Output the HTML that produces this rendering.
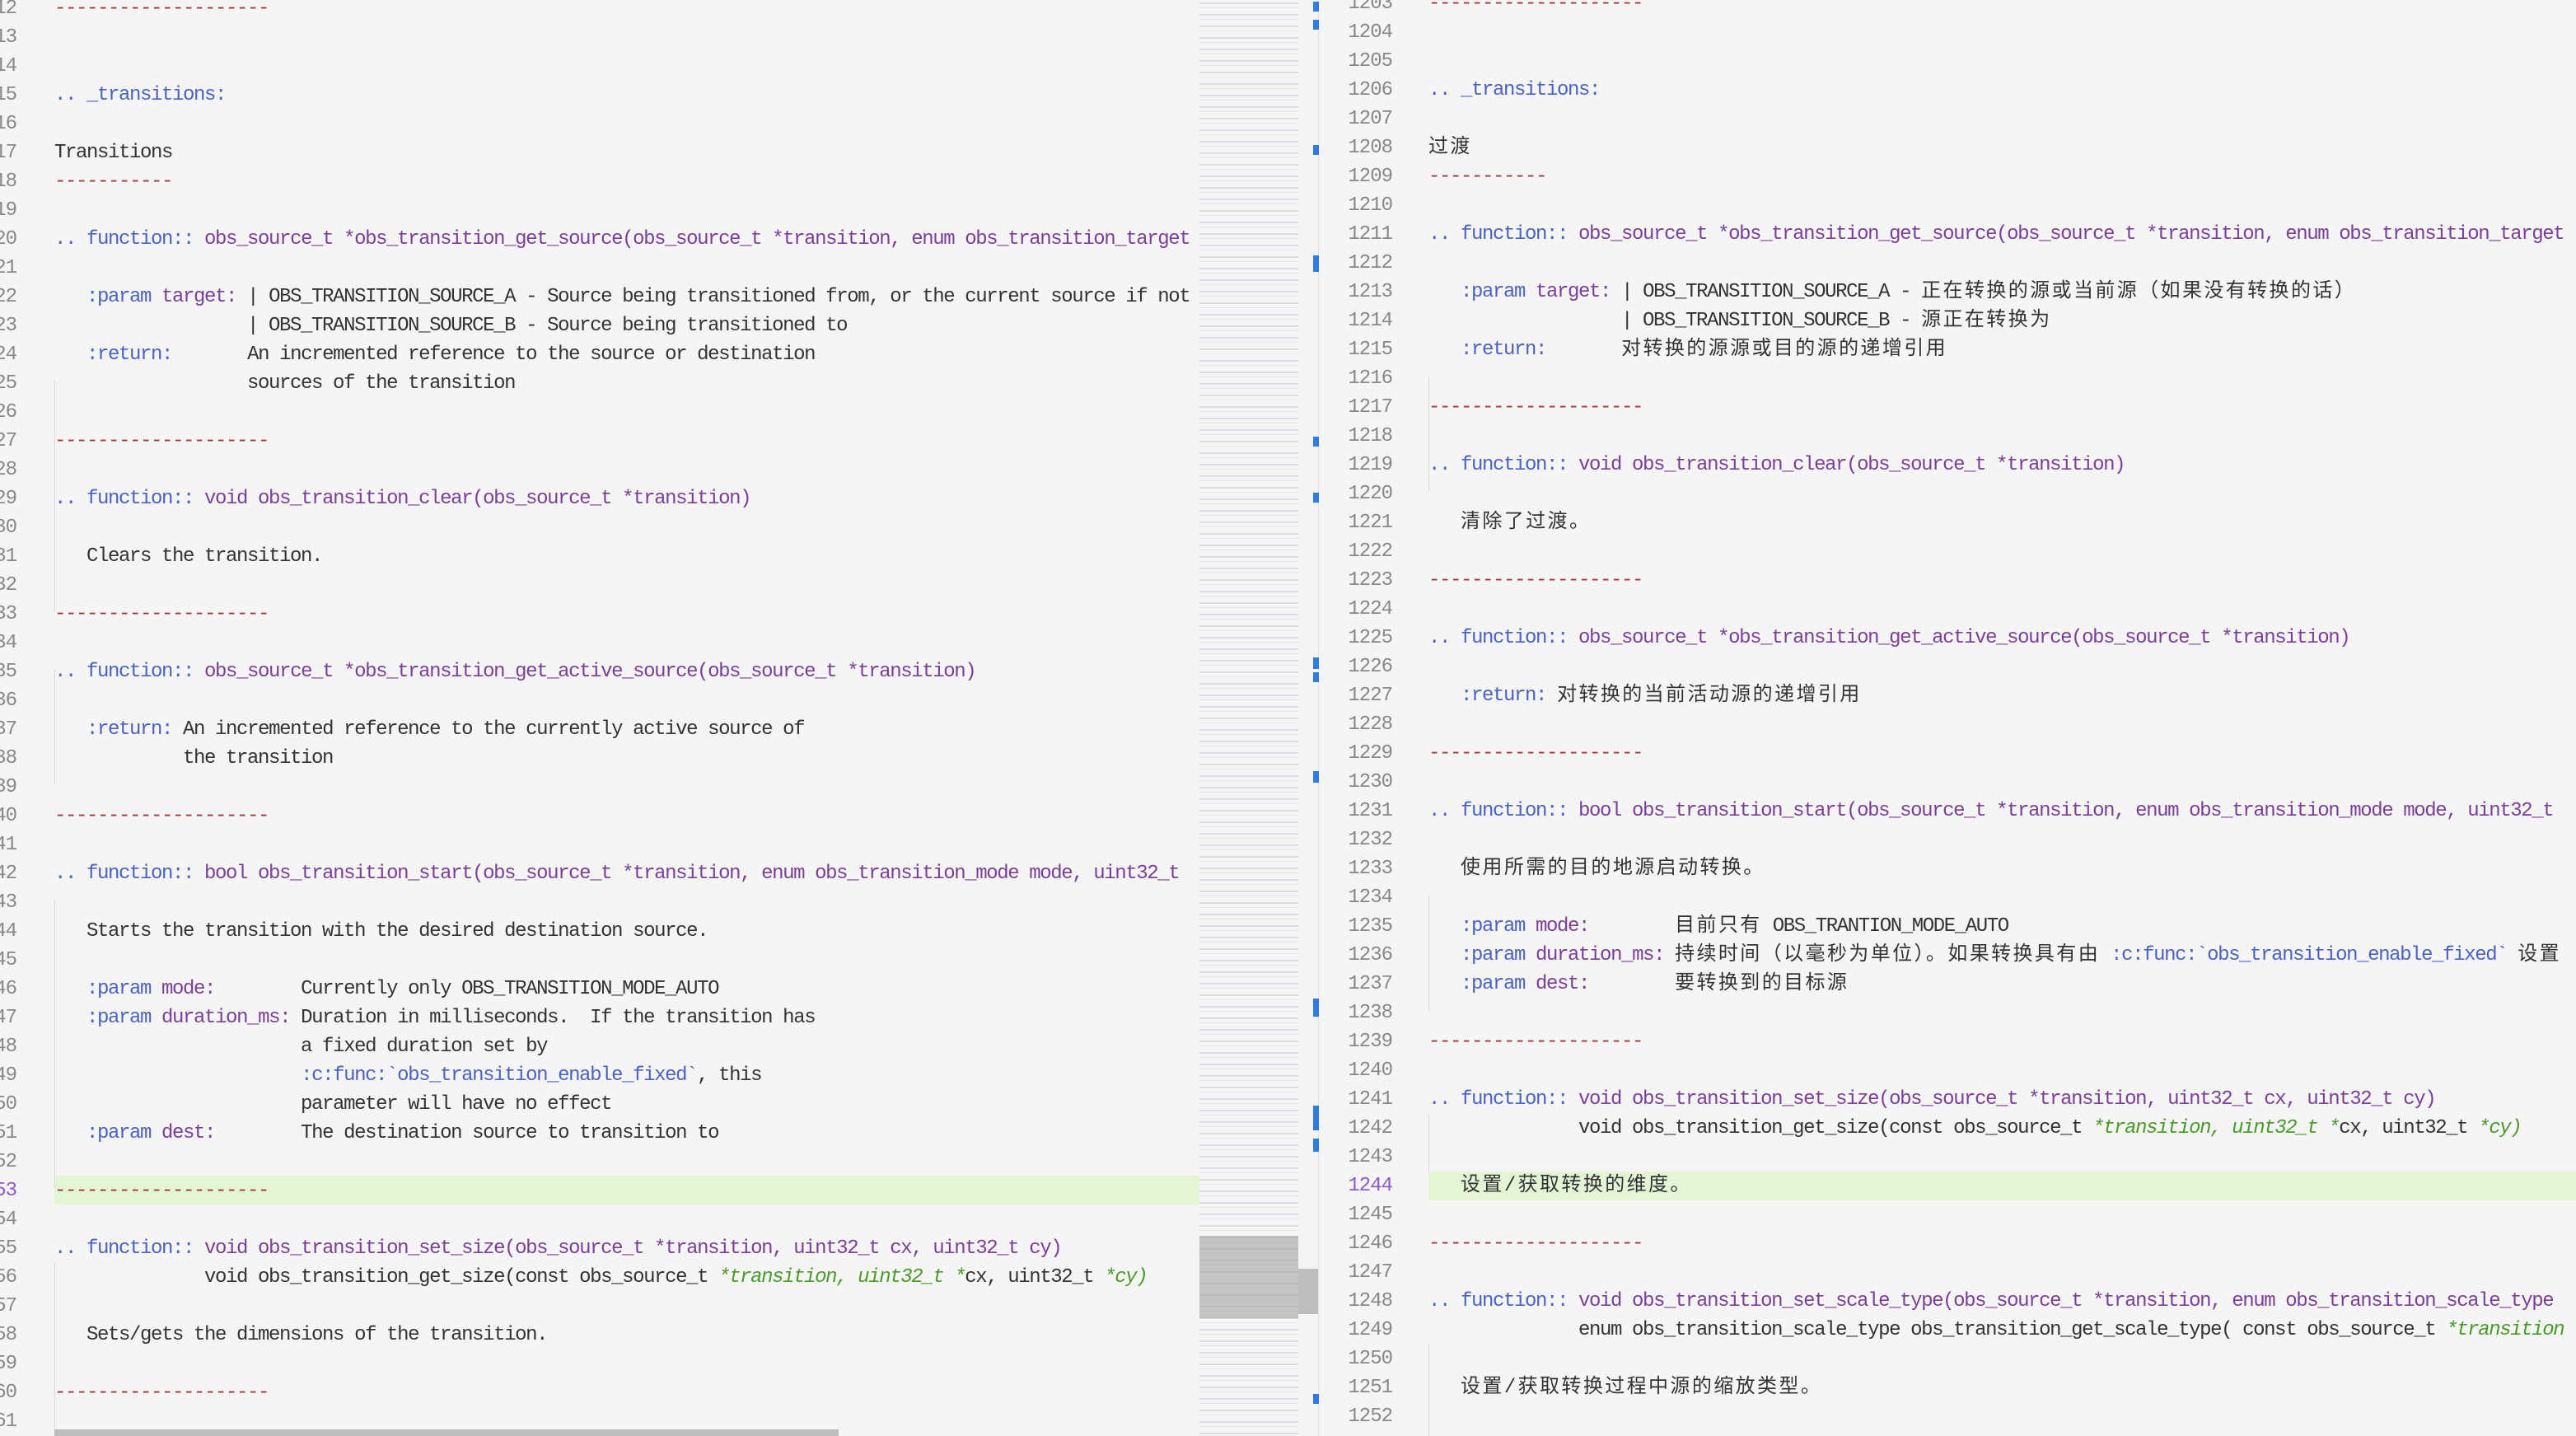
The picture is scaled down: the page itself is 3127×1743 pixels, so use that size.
<!DOCTYPE html>
<html><head><meta charset="utf-8"><style>
body{margin:0;width:3127px;height:1743px;overflow:hidden;background:#f5f5f5;position:relative;font-family:"Liberation Mono","Noto Sans CJK SC",monospace;font-size:24px;letter-spacing:-1.4px;color:#333}
.p{position:absolute;top:0;height:1743px;overflow:hidden}
.l{position:absolute;left:0;height:35px;line-height:35px;white-space:pre}
.n{position:absolute;height:35px;line-height:35px;text-align:right;color:#888;white-space:pre;letter-spacing:-1px}
.b{color:#4b62c4}.u{color:#7a3f98}.d{color:#a33a3a}.g{color:#4a9a2a;font-style:italic}
.c{letter-spacing:2.4px}
.hl{position:absolute;height:35px;background:#e4f5d6}
.v{position:absolute;width:1px;background:#d8d8d8}
.m{position:absolute;left:1594px;width:7px;background:#2f7ae5}
</style></head><body>
<div class="p" style="left:0;width:1456px">
<div class="hl" style="left:66px;width:1390px;top:1427px"></div>
<div class="v" style="left:66px;top:462px;height:280px"></div>
<div class="v" style="left:66px;top:637px;height:70px"></div>
<div class="v" style="left:66px;top:812px;height:140px"></div>
<div class="v" style="left:66px;top:1092px;height:350px"></div>
<div class="v" style="left:66px;top:1532px;height:210px"></div>
<div class="n" style="left:-60px;width:80px;top:-7px">12</div>
<div class="n" style="left:-60px;width:80px;top:28px">13</div>
<div class="n" style="left:-60px;width:80px;top:63px">14</div>
<div class="n" style="left:-60px;width:80px;top:98px">15</div>
<div class="n" style="left:-60px;width:80px;top:133px">16</div>
<div class="n" style="left:-60px;width:80px;top:168px">17</div>
<div class="n" style="left:-60px;width:80px;top:203px">18</div>
<div class="n" style="left:-60px;width:80px;top:238px">19</div>
<div class="n" style="left:-60px;width:80px;top:273px">20</div>
<div class="n" style="left:-60px;width:80px;top:308px">21</div>
<div class="n" style="left:-60px;width:80px;top:343px">22</div>
<div class="n" style="left:-60px;width:80px;top:378px">23</div>
<div class="n" style="left:-60px;width:80px;top:413px">24</div>
<div class="n" style="left:-60px;width:80px;top:448px">25</div>
<div class="n" style="left:-60px;width:80px;top:483px">26</div>
<div class="n" style="left:-60px;width:80px;top:518px">27</div>
<div class="n" style="left:-60px;width:80px;top:553px">28</div>
<div class="n" style="left:-60px;width:80px;top:588px">29</div>
<div class="n" style="left:-60px;width:80px;top:623px">30</div>
<div class="n" style="left:-60px;width:80px;top:658px">31</div>
<div class="n" style="left:-60px;width:80px;top:693px">32</div>
<div class="n" style="left:-60px;width:80px;top:728px">33</div>
<div class="n" style="left:-60px;width:80px;top:763px">34</div>
<div class="n" style="left:-60px;width:80px;top:798px">35</div>
<div class="n" style="left:-60px;width:80px;top:833px">36</div>
<div class="n" style="left:-60px;width:80px;top:868px">37</div>
<div class="n" style="left:-60px;width:80px;top:903px">38</div>
<div class="n" style="left:-60px;width:80px;top:938px">39</div>
<div class="n" style="left:-60px;width:80px;top:973px">40</div>
<div class="n" style="left:-60px;width:80px;top:1008px">41</div>
<div class="n" style="left:-60px;width:80px;top:1043px">42</div>
<div class="n" style="left:-60px;width:80px;top:1078px">43</div>
<div class="n" style="left:-60px;width:80px;top:1113px">44</div>
<div class="n" style="left:-60px;width:80px;top:1148px">45</div>
<div class="n" style="left:-60px;width:80px;top:1183px">46</div>
<div class="n" style="left:-60px;width:80px;top:1218px">47</div>
<div class="n" style="left:-60px;width:80px;top:1253px">48</div>
<div class="n" style="left:-60px;width:80px;top:1288px">49</div>
<div class="n" style="left:-60px;width:80px;top:1323px">50</div>
<div class="n" style="left:-60px;width:80px;top:1358px">51</div>
<div class="n" style="left:-60px;width:80px;top:1393px">52</div>
<div class="n" style="left:-60px;width:80px;top:1428px;color:#8a5cd0">53</div>
<div class="n" style="left:-60px;width:80px;top:1463px">54</div>
<div class="n" style="left:-60px;width:80px;top:1498px">55</div>
<div class="n" style="left:-60px;width:80px;top:1533px">56</div>
<div class="n" style="left:-60px;width:80px;top:1568px">57</div>
<div class="n" style="left:-60px;width:80px;top:1603px">58</div>
<div class="n" style="left:-60px;width:80px;top:1638px">59</div>
<div class="n" style="left:-60px;width:80px;top:1673px">60</div>
<div class="n" style="left:-60px;width:80px;top:1708px">61</div>
<div style="position:absolute;left:66px;top:0">
<div class="l d" style="top:-7px">--------------------</div>
<div class="l b" style="top:98px">.. _transitions:</div>
<div class="l" style="top:168px">Transitions</div>
<div class="l d" style="top:203px">-----------</div>
<div class="l" style="top:273px"><span class="b">.. function::</span> <span class="u">obs_source_t *obs_transition_get_source(obs_source_t *transition, enum obs_transition_target</span></div>
<div class="l" style="top:343px">   <span class="b">:param</span> <span class="u">target:</span> | OBS_TRANSITION_SOURCE_A - Source being transitioned from, or the current source if not</div>
<div class="l" style="top:378px">                  | OBS_TRANSITION_SOURCE_B - Source being transitioned to</div>
<div class="l" style="top:413px">   <span class="b">:return:</span>       An incremented reference to the source or destination</div>
<div class="l" style="top:448px">                  sources of the transition</div>
<div class="l d" style="top:518px">--------------------</div>
<div class="l" style="top:588px"><span class="b">.. function::</span> <span class="u">void obs_transition_clear(obs_source_t *transition)</span></div>
<div class="l" style="top:658px">   Clears the transition.</div>
<div class="l d" style="top:728px">--------------------</div>
<div class="l" style="top:798px"><span class="b">.. function::</span> <span class="u">obs_source_t *obs_transition_get_active_source(obs_source_t *transition)</span></div>
<div class="l" style="top:868px">   <span class="b">:return:</span> An incremented reference to the currently active source of</div>
<div class="l" style="top:903px">            the transition</div>
<div class="l d" style="top:973px">--------------------</div>
<div class="l" style="top:1043px"><span class="b">.. function::</span> <span class="u">bool obs_transition_start(obs_source_t *transition, enum obs_transition_mode mode, uint32_t</span></div>
<div class="l" style="top:1113px">   Starts the transition with the desired destination source.</div>
<div class="l" style="top:1183px">   <span class="b">:param</span> <span class="u">mode:</span>        Currently only OBS_TRANSITION_MODE_AUTO</div>
<div class="l" style="top:1218px">   <span class="b">:param</span> <span class="u">duration_ms:</span> Duration in milliseconds.  If the transition has</div>
<div class="l" style="top:1253px">                       a fixed duration set by</div>
<div class="l" style="top:1288px">                       <span class="b">:c:func:`obs_transition_enable_fixed`</span>, this</div>
<div class="l" style="top:1323px">                       parameter will have no effect</div>
<div class="l" style="top:1358px">   <span class="b">:param</span> <span class="u">dest:</span>        The destination source to transition to</div>
<div class="l d" style="top:1428px">--------------------</div>
<div class="l" style="top:1498px"><span class="b">.. function::</span> <span class="u">void obs_transition_set_size(obs_source_t *transition, uint32_t cx, uint32_t cy)</span></div>
<div class="l" style="top:1533px">              void obs_transition_get_size(const obs_source_t <span class="g">*transition, uint32_t *</span>cx, uint32_t <span class="g">*cy)</span></div>
<div class="l" style="top:1603px">   Sets/gets the dimensions of the transition.</div>
<div class="l d" style="top:1673px">--------------------</div>
</div>
<div style="position:absolute;left:66px;top:1735px;width:952px;height:8px;background:#bdbdbd"></div>
</div>
<div style="position:absolute;left:1456px;top:0;width:120px;height:1743px;background:repeating-linear-gradient(180deg,#f5f5f5 0 3px,#dcdce4 3px 5px,#f5f5f5 5px 9px,#e6e6ea 9px 10px,#f5f5f5 10px 14px)"></div>
<div style="position:absolute;left:1456px;top:1500px;width:120px;height:100px;background:rgba(150,150,150,.5)"></div>
<div style="position:absolute;left:1576px;top:1540px;width:24px;height:55px;background:#bdbdbd"></div>
<div style="position:absolute;left:1600px;top:0;width:1px;height:1743px;background:#e2e2e2"></div>
<div class="m" style="top:2px;height:12px"></div>
<div class="m" style="top:24px;height:12px"></div>
<div class="m" style="top:176px;height:12px"></div>
<div class="m" style="top:310px;height:20px"></div>
<div class="m" style="top:530px;height:12px"></div>
<div class="m" style="top:598px;height:12px"></div>
<div class="m" style="top:798px;height:14px"></div>
<div class="m" style="top:816px;height:12px"></div>
<div class="m" style="top:936px;height:14px"></div>
<div class="m" style="top:1212px;height:22px"></div>
<div class="m" style="top:1342px;height:30px"></div>
<div class="m" style="top:1382px;height:16px"></div>
<div class="m" style="top:1692px;height:12px"></div>
<div class="p" style="left:1602px;width:1525px">
<div class="hl" style="left:132px;width:1393px;top:1422px"></div>
<div class="v" style="left:132px;top:457px;height:140px"></div>
<div class="v" style="left:132px;top:1087px;height:140px"></div>
<div class="v" style="left:132px;top:1352px;height:70px"></div>
<div class="v" style="left:132px;top:1632px;height:111px"></div>
</div>
<div style="position:absolute;left:1602px;top:0">
<div class="n" style="left:0;width:88px;top:-13px">1203</div>
<div class="n" style="left:0;width:88px;top:22px">1204</div>
<div class="n" style="left:0;width:88px;top:57px">1205</div>
<div class="n" style="left:0;width:88px;top:92px">1206</div>
<div class="n" style="left:0;width:88px;top:127px">1207</div>
<div class="n" style="left:0;width:88px;top:162px">1208</div>
<div class="n" style="left:0;width:88px;top:197px">1209</div>
<div class="n" style="left:0;width:88px;top:232px">1210</div>
<div class="n" style="left:0;width:88px;top:267px">1211</div>
<div class="n" style="left:0;width:88px;top:302px">1212</div>
<div class="n" style="left:0;width:88px;top:337px">1213</div>
<div class="n" style="left:0;width:88px;top:372px">1214</div>
<div class="n" style="left:0;width:88px;top:407px">1215</div>
<div class="n" style="left:0;width:88px;top:442px">1216</div>
<div class="n" style="left:0;width:88px;top:477px">1217</div>
<div class="n" style="left:0;width:88px;top:512px">1218</div>
<div class="n" style="left:0;width:88px;top:547px">1219</div>
<div class="n" style="left:0;width:88px;top:582px">1220</div>
<div class="n" style="left:0;width:88px;top:617px">1221</div>
<div class="n" style="left:0;width:88px;top:652px">1222</div>
<div class="n" style="left:0;width:88px;top:687px">1223</div>
<div class="n" style="left:0;width:88px;top:722px">1224</div>
<div class="n" style="left:0;width:88px;top:757px">1225</div>
<div class="n" style="left:0;width:88px;top:792px">1226</div>
<div class="n" style="left:0;width:88px;top:827px">1227</div>
<div class="n" style="left:0;width:88px;top:862px">1228</div>
<div class="n" style="left:0;width:88px;top:897px">1229</div>
<div class="n" style="left:0;width:88px;top:932px">1230</div>
<div class="n" style="left:0;width:88px;top:967px">1231</div>
<div class="n" style="left:0;width:88px;top:1002px">1232</div>
<div class="n" style="left:0;width:88px;top:1037px">1233</div>
<div class="n" style="left:0;width:88px;top:1072px">1234</div>
<div class="n" style="left:0;width:88px;top:1107px">1235</div>
<div class="n" style="left:0;width:88px;top:1142px">1236</div>
<div class="n" style="left:0;width:88px;top:1177px">1237</div>
<div class="n" style="left:0;width:88px;top:1212px">1238</div>
<div class="n" style="left:0;width:88px;top:1247px">1239</div>
<div class="n" style="left:0;width:88px;top:1282px">1240</div>
<div class="n" style="left:0;width:88px;top:1317px">1241</div>
<div class="n" style="left:0;width:88px;top:1352px">1242</div>
<div class="n" style="left:0;width:88px;top:1387px">1243</div>
<div class="n" style="left:0;width:88px;top:1422px;color:#8a5cd0">1244</div>
<div class="n" style="left:0;width:88px;top:1457px">1245</div>
<div class="n" style="left:0;width:88px;top:1492px">1246</div>
<div class="n" style="left:0;width:88px;top:1527px">1247</div>
<div class="n" style="left:0;width:88px;top:1562px">1248</div>
<div class="n" style="left:0;width:88px;top:1597px">1249</div>
<div class="n" style="left:0;width:88px;top:1632px">1250</div>
<div class="n" style="left:0;width:88px;top:1667px">1251</div>
<div class="n" style="left:0;width:88px;top:1702px">1252</div>
</div>
<div class="p" style="left:1734px;width:1393px">
<div class="l d" style="top:-13px">--------------------</div>
<div class="l b" style="top:92px">.. _transitions:</div>
<div class="l c" style="top:162px">过渡</div>
<div class="l d" style="top:197px">-----------</div>
<div class="l" style="top:267px"><span class="b">.. function::</span> <span class="u">obs_source_t *obs_transition_get_source(obs_source_t *transition, enum obs_transition_target</span></div>
<div class="l" style="top:337px">   <span class="b">:param</span> <span class="u">target:</span> | OBS_TRANSITION_SOURCE_A - <span class="c">正在转换的源或当前源（如果没有转换的话）</span></div>
<div class="l" style="top:372px">                  | OBS_TRANSITION_SOURCE_B - <span class="c">源正在转换为</span></div>
<div class="l" style="top:407px">   <span class="b">:return:</span>       <span class="c">对转换的源源或目的源的递增引用</span></div>
<div class="l d" style="top:477px">--------------------</div>
<div class="l" style="top:547px"><span class="b">.. function::</span> <span class="u">void obs_transition_clear(obs_source_t *transition)</span></div>
<div class="l" style="top:617px">   <span class="c">清除了过渡。</span></div>
<div class="l d" style="top:687px">--------------------</div>
<div class="l" style="top:757px"><span class="b">.. function::</span> <span class="u">obs_source_t *obs_transition_get_active_source(obs_source_t *transition)</span></div>
<div class="l" style="top:827px">   <span class="b">:return:</span> <span class="c">对转换的当前活动源的递增引用</span></div>
<div class="l d" style="top:897px">--------------------</div>
<div class="l" style="top:967px"><span class="b">.. function::</span> <span class="u">bool obs_transition_start(obs_source_t *transition, enum obs_transition_mode mode, uint32_t</span></div>
<div class="l" style="top:1037px">   <span class="c">使用所需的目的地源启动转换。</span></div>
<div class="l" style="top:1107px">   <span class="b">:param</span> <span class="u">mode:</span>        <span class="c">目前只有</span> OBS_TRANTION_MODE_AUTO</div>
<div class="l" style="top:1142px">   <span class="b">:param</span> <span class="u">duration_ms:</span> <span class="c">持续时间（以毫秒为单位）。如果转换具有由</span> <span class="b">:c:func:`obs_transition_enable_fixed`</span> <span class="c">设置</span></div>
<div class="l" style="top:1177px">   <span class="b">:param</span> <span class="u">dest:</span>        <span class="c">要转换到的目标源</span></div>
<div class="l d" style="top:1247px">--------------------</div>
<div class="l" style="top:1317px"><span class="b">.. function::</span> <span class="u">void obs_transition_set_size(obs_source_t *transition, uint32_t cx, uint32_t cy)</span></div>
<div class="l" style="top:1352px">              void obs_transition_get_size(const obs_source_t <span class="g">*transition, uint32_t *</span>cx, uint32_t <span class="g">*cy)</span></div>
<div class="l" style="top:1422px">   <span class="c">设置/获取转换的维度。</span></div>
<div class="l d" style="top:1492px">--------------------</div>
<div class="l" style="top:1562px"><span class="b">.. function::</span> <span class="u">void obs_transition_set_scale_type(obs_source_t *transition, enum obs_transition_scale_type</span></div>
<div class="l" style="top:1597px">              enum obs_transition_scale_type obs_transition_get_scale_type( const obs_source_t <span class="g">*transition</span></div>
<div class="l" style="top:1667px">   <span class="c">设置/获取转换过程中源的缩放类型。</span></div>
</div>
</body></html>
